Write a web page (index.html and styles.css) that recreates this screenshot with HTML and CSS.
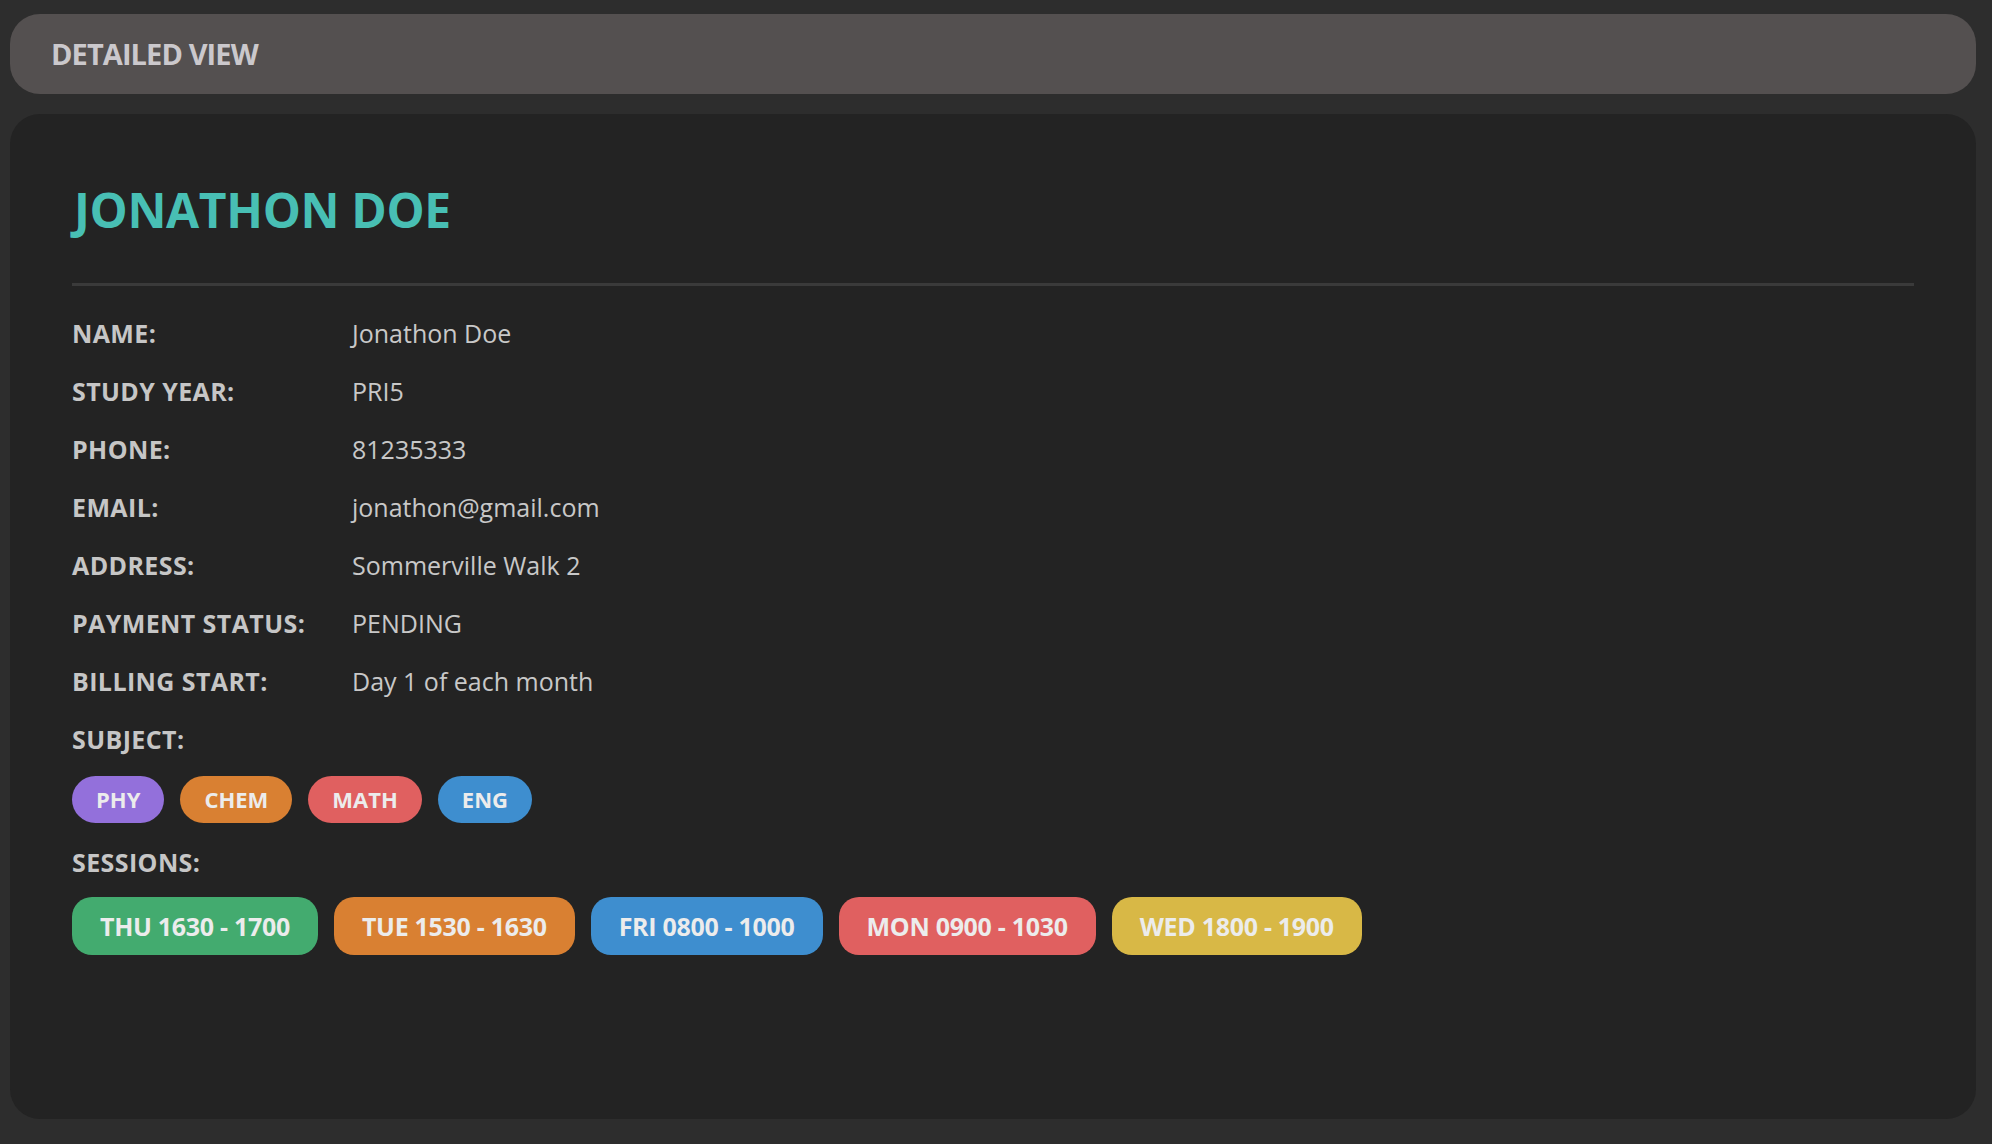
FILE: index.html
```html
<!DOCTYPE html>
<html lang="en">
<head>
<meta charset="utf-8">
<title>Detailed View</title>
<link rel="stylesheet" href="styles.css">
</head>
<body>
  <header class="topbar">
    <h1 class="topbar-title">DETAILED VIEW</h1>
  </header>
  <main class="panel">
    <h2 class="person-name">JONATHON DOE</h2>
    <div class="divider"></div>
    <dl class="details">
      <div class="row"><dt class="label">NAME:</dt><dd class="value">Jonathon Doe</dd></div>
      <div class="row"><dt class="label">STUDY YEAR:</dt><dd class="value">PRI5</dd></div>
      <div class="row"><dt class="label">PHONE:</dt><dd class="value">81235333</dd></div>
      <div class="row"><dt class="label">EMAIL:</dt><dd class="value">jonathon@gmail.com</dd></div>
      <div class="row"><dt class="label">ADDRESS:</dt><dd class="value">Sommerville Walk 2</dd></div>
      <div class="row"><dt class="label">PAYMENT STATUS:</dt><dd class="value">PENDING</dd></div>
      <div class="row"><dt class="label">BILLING START:</dt><dd class="value">Day 1 of each month</dd></div>
    </dl>
    <div class="section-label">SUBJECT:</div>
    <div class="tags">
      <span class="tag tag-purple">PHY</span>
      <span class="tag tag-orange">CHEM</span>
      <span class="tag tag-red">MATH</span>
      <span class="tag tag-blue">ENG</span>
    </div>
    <div class="section-label section-label-sessions">SESSIONS:</div>
    <div class="sessions">
      <span class="session tag-green">THU 1630 - 1700</span>
      <span class="session tag-orange">TUE 1530 - 1630</span>
      <span class="session tag-blue">FRI 0800 - 1000</span>
      <span class="session tag-red">MON 0900 - 1030</span>
      <span class="session tag-yellow">WED 1800 - 1900</span>
    </div>
  </main>
</body>
</html>
```

FILE: styles.css
```css
html, body {
  height: 100%;
}

body {
  margin: 0;
  padding: 14px 16px 25px 10px;
  box-sizing: border-box;
  background: #2d2d2d;
  font-family: "Open Sans", "Noto Sans", "Liberation Sans", sans-serif;
  display: flex;
  flex-direction: column;
  gap: 20px;
}

.topbar {
  height: 80px;
  flex: 0 0 auto;
  background: #545050;
  border-radius: 30px;
  display: flex;
  align-items: center;
  padding-left: 41px;
}

.topbar-title {
  margin: 0 0 2px 0;
  font-size: 29px;
  font-weight: 700;
  color: #cbc8cc;
  letter-spacing: -0.9px;
  line-height: 1;
}

.panel {
  flex: 1 1 auto;
  background: #232323;
  border-radius: 30px;
  padding: 67px 62px 0 62px;
  display: flex;
  flex-direction: column;
}

.person-name {
  margin: 0 0 0 2px;
  font-size: 48px;
  line-height: 57.6px;
  font-weight: 700;
  color: #48bfb4;
  letter-spacing: -0.35px;
}

.divider {
  height: 3px;
  background: #3a3a3a;
  margin-top: 44px;
  margin-bottom: 18px;
}

.details {
  margin: 0;
}

.row {
  display: flex;
  height: 58px;
  align-items: center;
}

.label,
.section-label {
  font-size: 25px;
  line-height: 58px;
  font-weight: 700;
  color: #c6c6c6;
  letter-spacing: 0.4px;
}

.label {
  width: 280px;
  flex: 0 0 280px;
}

.value {
  margin: 0;
  font-size: 25px;
  line-height: 58px;
  font-weight: 400;
  color: #c8c8c8;
  letter-spacing: 0;
}

.tags {
  display: flex;
  gap: 16px;
  margin-top: 8px;
}

.tag {
  height: 47px;
  padding: 0 24px;
  border-radius: 24px;
  display: inline-flex;
  align-items: center;
  font-size: 22px;
  font-weight: 700;
  color: #ececec;
  letter-spacing: 0;
}

.section-label-sessions {
  margin-top: 10px;
}

.sessions {
  display: flex;
  gap: 16px;
  margin-top: 6px;
}

.session {
  height: 58px;
  padding: 0 28px;
  border-radius: 20px;
  display: inline-flex;
  align-items: center;
  font-size: 25px;
  font-weight: 700;
  color: #ececec;
  letter-spacing: -0.3px;
}

.tag-purple { background: #9370db; }
.tag-orange { background: #d98032; }
.tag-red { background: #e06060; }
.tag-blue { background: #3e8ecf; }
.tag-green { background: #43ab6f; }
.tag-yellow { background: #d8b846; }
```
